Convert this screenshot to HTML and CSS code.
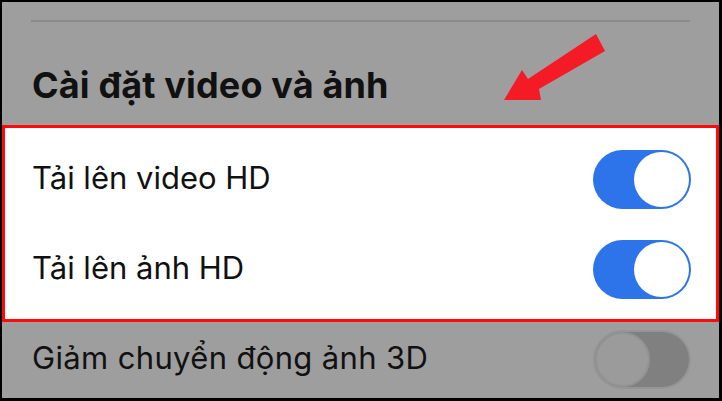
FILE: index.html
```html
<!DOCTYPE html>
<html lang="vi">
<head>
<meta charset="utf-8">
<link rel="stylesheet" href="styles.css">
</head>
<body>
<div class="frame">
  <div class="divider"></div>
  <h2 class="section-title">Cài đặt video và ảnh</h2>
  <div class="highlight">
    <div class="row">
      <span class="label">Tải lên video HD</span>
      <span class="toggle on"><span class="knob"></span></span>
    </div>
    <div class="row">
      <span class="label">Tải lên ảnh HD</span>
      <span class="toggle on"><span class="knob"></span></span>
    </div>
  </div>
  <div class="row dim">
    <span class="label">Giảm chuyển động ảnh 3D</span>
    <span class="toggle off"><span class="knob"></span></span>
  </div>
  <svg class="arrow" width="120" height="80" viewBox="0 0 120 80">
    <polygon points="93,11 102,28 36,66 38,77 1,77 19,47 25,56" fill="#f41b26"/>
  </svg>
</div>
</body>
</html>
```

FILE: styles.css
```css
html, body {
  margin: 0;
  padding: 0;
  background: #000;
}
body {
  width: 722px;
  height: 401px;
  overflow: hidden;
  font-family: Inter, "Noto Sans", "DejaVu Sans", sans-serif;
  color: #111;
}
.frame {
  position: relative;
  width: 717px;
  height: 396px;
  margin: 2px 0 0 2px;
  background: #9e9e9e;
  display: flex;
  flex-direction: column;
}
.divider {
  margin: 18px 0 0 29px;
  width: 659px;
  height: 2px;
  background: #8a8a8a;
}
.section-title {
  margin: 0;
  height: 103px;
  box-sizing: border-box;
  padding: 43px 0 0 30px;
  font-size: 36px;
  font-weight: 700;
  line-height: 40px;
  letter-spacing: 0.15px;
}
.highlight {
  border: 3px solid #ff0a0a;
  background: #fff;
  padding: 6px 25px 5px 27px;
  display: flex;
  flex-direction: column;
}
.row {
  height: 90px;
  display: flex;
  align-items: center;
  justify-content: space-between;
}
.label {
  font-size: 31px;
  font-weight: 400;
  line-height: 36px;
  margin-bottom: 2px;
}
.row.dim {
  height: 74px;
  padding: 0 28px 0 30px;
}
.row.dim .label {
  letter-spacing: 0.35px;
}
.toggle {
  position: relative;
  width: 98px;
  height: 59px;
  border-radius: 30px;
  box-sizing: border-box;
}
.toggle .knob {
  position: absolute;
  top: 2px;
  width: 55px;
  height: 55px;
  border-radius: 50%;
  box-sizing: border-box;
}
.toggle.on {
  background: #2d73ea;
}
.toggle.on .knob {
  right: 2px;
  background: #fff;
}
.toggle.off {
  background: #808080;
  border: 2px solid #959595;
}
.toggle.off .knob {
  left: 0;
  top: 0;
  width: 55px;
  height: 55px;
  background: #9b9b9b;
  border: 2px solid #939393;
}
.arrow {
  position: absolute;
  left: 501px;
  top: 21px;
}
```
